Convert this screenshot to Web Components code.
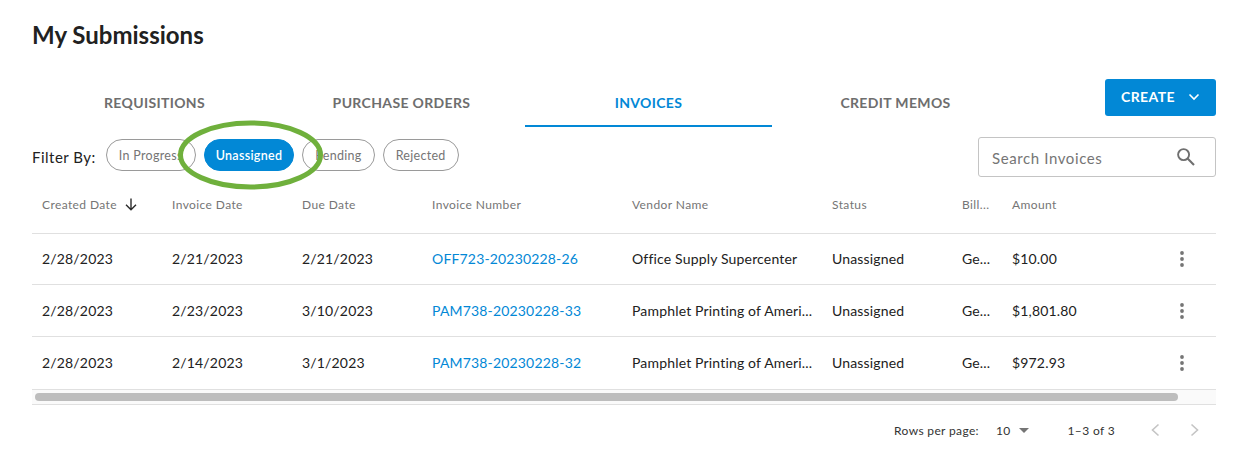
<!DOCTYPE html>
<html>
<head>
<meta charset="utf-8">
<title>My Submissions</title>
<style>
  body { margin: 0; background: #fff; font-family: Lato, "Open Sans", sans-serif; color: #212121; }
</style>
</head>
<body>
<submissions-page></submissions-page>
<script>
const icons = {
  chevron: '<svg width="12" height="8" viewBox="0 0 12 8"><path d="M1.5 1.5 6 6l4.5-4.5" fill="none" stroke="currentColor" stroke-width="1.6"/></svg>',
  search: '<svg width="20" height="20" viewBox="0 0 20 20"><circle cx="7.6" cy="7.6" r="5.5" fill="none" stroke="#6f6f6f" stroke-width="1.9"/><path d="M11.6 11.6 18 18" fill="none" stroke="#6f6f6f" stroke-width="2.1"/></svg>',
  down: '<svg width="12" height="13" viewBox="0 0 12 13"><path d="M6 0.5v11M1 6.8l5 5 5-5" fill="none" stroke="#2b2b2b" stroke-width="1.4"/></svg>',
  kebab: '<svg width="6" height="16" viewBox="0 0 6 16"><circle cx="3" cy="2" r="1.9" fill="#757575"/><circle cx="3" cy="8" r="1.9" fill="#757575"/><circle cx="3" cy="14" r="1.9" fill="#757575"/></svg>',
  left: '<svg width="10" height="14" viewBox="0 0 10 14"><path d="M8.5 1.5 2.5 7l6 5.5" fill="none" stroke="#c4c4c4" stroke-width="1.6"/></svg>',
  right: '<svg width="10" height="14" viewBox="0 0 10 14"><path d="M1.5 1.5 7.5 7l-6 5.5" fill="none" stroke="#c4c4c4" stroke-width="1.6"/></svg>'
};

class TabStrip extends HTMLElement {
  constructor() {
    super();
    this.attachShadow({ mode: 'open' });
    const active = this.getAttribute('active');
    const tabs = this.getAttribute('tabs').split('|');
    this.shadowRoot.innerHTML = `
      <style>
        :host { display: grid; grid-template-columns: repeat(4, 247px); height: 48px; margin-left: -1px; }
        div {
          display: flex; align-items: center; justify-content: center;
          font-size: 14px; font-weight: 700; letter-spacing: 0.35px; color: #6e6e6e;
          padding-bottom: 2px; box-sizing: border-box; height: 48px;
        }
        div.on { color: #0288d6; border-bottom: 2px solid #0288d6; padding-bottom: 0; }
      </style>
      ${tabs.map(t => `<div class="${t === active ? 'on' : ''}">${t}</div>`).join('')}
    `;
  }
}

class CreateButton extends HTMLElement {
  constructor() {
    super();
    this.attachShadow({ mode: 'open' });
    this.shadowRoot.innerHTML = `
      <style>
        :host {
          display: flex; align-items: center; box-sizing: border-box;
          width: 111px; height: 37px; padding: 0 0 2px 16px; gap: 13px;
          background: #0288d6; color: #fff; border-radius: 3px;
          font-size: 14px; font-weight: 700; letter-spacing: 0.4px;
        }
      </style>
      <slot></slot>${icons.chevron}
    `;
  }
}

class FilterChip extends HTMLElement {
  constructor() {
    super();
    this.attachShadow({ mode: 'open' });
    this.shadowRoot.innerHTML = `
      <style>
        :host {
          display: flex; align-items: center; box-sizing: border-box; height: 32px;
          padding: 0 12px; border: 1px solid #9a9a9a; border-radius: 16px;
          font-size: 12.5px; letter-spacing: 0.3px; color: #757575; white-space: nowrap;
        }
        :host([selected]) { background: #0288d6; border-color: #0288d6; color: #fff; font-weight: 600; padding: 0 11px; }
      </style>
      <slot></slot>
    `;
  }
}

class SearchBox extends HTMLElement {
  constructor() {
    super();
    this.attachShadow({ mode: 'open' });
    this.shadowRoot.innerHTML = `
      <style>
        :host {
          display: flex; align-items: center; justify-content: space-between; box-sizing: border-box;
          width: 238px; height: 40px; padding: 0 19px 0 13px;
          border: 1px solid #c4c4c4; border-radius: 3px;
          font-size: 15px; letter-spacing: 0.6px; color: #757575;
        }
        span { padding-top: 2px; }
      </style>
      <span><slot></slot></span>${icons.search}
    `;
  }
}

const COLS = 'grid-template-columns: 130px 130px 130px 200px 200px 130px 50px 160px 40px;';

class HeadRow extends HTMLElement {
  constructor() {
    super();
    this.attachShadow({ mode: 'open' });
    const labels = ['Created Date', 'Invoice Date', 'Due Date', 'Invoice Number', 'Vendor Name', 'Status', 'Bill...', 'Amount'];
    this.shadowRoot.innerHTML = `
      <style>
        :host {
          display: grid; ${COLS} height: 57px; box-sizing: border-box;
          border-bottom: 1px solid #e0e0e0; font-size: 12px; letter-spacing: 0.4px; color: #757575;
          padding-bottom: 2px;
        }
        div { display: flex; align-items: center; gap: 8px; padding-left: 10px; }
      </style>
      ${labels.map((l, i) => `<div>${l}${i === 0 ? icons.down : ''}</div>`).join('')}
    `;
  }
}

class InvoiceRow extends HTMLElement {
  constructor() {
    super();
    this.attachShadow({ mode: 'open' });
    const cells = this.getAttribute('cells').split('|');
    this.shadowRoot.innerHTML = `
      <style>
        :host {
          display: grid; ${COLS} box-sizing: border-box; height: var(--row-height, 52px);
          padding-bottom: var(--row-pad, 0);
          border-bottom: 1px solid #e0e0e0; font-size: 14px; letter-spacing: 0.17px; color: #212121;
        }
        div { display: flex; align-items: center; padding-left: 10px; white-space: nowrap; }
        .link { color: #0288d6; }
        .more { padding-left: 0; justify-content: center; }
      </style>
      ${cells.map((c, i) => `<div class="${i === 3 ? 'link' : ''}">${c}</div>`).join('')}
      <div class="more">${icons.kebab}</div>
    `;
  }
}

class ScrollBar extends HTMLElement {
  constructor() {
    super();
    this.attachShadow({ mode: 'open' });
    this.shadowRoot.innerHTML = `
      <style>
        :host {
          display: block; box-sizing: border-box; height: 15px; padding: 3px 38px 3px 3px;
          background: #fafafa; border-bottom: 1px solid #e0e0e0;
        }
        div { height: 8px; border-radius: 4px; background: #bdbdbd; }
      </style>
      <div></div>
    `;
  }
}

class TablePager extends HTMLElement {
  constructor() {
    super();
    this.attachShadow({ mode: 'open' });
    this.shadowRoot.innerHTML = `
      <style>
        :host {
          display: flex; align-items: center; justify-content: flex-end; height: 50px;
          padding-right: 16px; font-size: 12px; letter-spacing: 0.35px; color: #333;
        }
        .count { margin-left: 17px; }
        .caret { width: 0; height: 0; border: 5px solid transparent; border-top: 5px solid #757575; border-bottom: 0; margin: 0 39px 0 8px; }
        .range { margin-right: 35px; }
        .nav { display: flex; gap: 30px; align-items: center; margin-top: -1px; }
        span { display: block; }
      </style>
      <span>Rows per page:</span>
      <span class="count">10</span><span class="caret"></span>
      <span class="range">1–3 of 3</span>
      <span class="nav">${icons.left}${icons.right}</span>
    `;
  }
}

class SubmissionsPage extends HTMLElement {
  constructor() {
    super();
    this.attachShadow({ mode: 'open' });
    this.shadowRoot.innerHTML = `
      <style>
        :host { display: block; box-sizing: border-box; width: 1246px; height: 461px; padding: 20px 30px 0 32px; position: relative; overflow: hidden; }
        h1 { margin: 0 0 29px; height: 30px; line-height: 30px; font-size: 24px; font-weight: 700; color: #212121; }
        .top { display: flex; justify-content: space-between; align-items: flex-start; }
        .filters { display: flex; justify-content: space-between; align-items: flex-start; padding-top: 10px; }
        .chips { display: flex; align-items: center; gap: 8px; margin-top: 2px; }
        .label { font-size: 15px; color: #212121; margin: 4px 2px 0 0; letter-spacing: 0.5px; }
        svg.ring { position: absolute; left: 176px; top: 119px; pointer-events: none; }
      </style>
      <h1>My Submissions</h1>
      <div class="top">
        <tab-strip tabs="REQUISITIONS|PURCHASE ORDERS|INVOICES|CREDIT MEMOS" active="INVOICES"></tab-strip>
        <create-button>CREATE</create-button>
      </div>
      <div class="filters">
        <div class="chips">
          <span class="label">Filter By:</span>
          <filter-chip>In Progress</filter-chip>
          <filter-chip selected>Unassigned</filter-chip>
          <filter-chip>Pending</filter-chip>
          <filter-chip>Rejected</filter-chip>
        </div>
        <search-box>Search Invoices</search-box>
      </div>
      <head-row></head-row>
      <invoice-row style="--row-height:51px;--row-pad:1px" cells="2/28/2023|2/21/2023|2/21/2023|OFF723-20230228-26|Office Supply Supercenter|Unassigned|Ge...|$10.00"></invoice-row>
      <invoice-row style="--row-height:52px" cells="2/28/2023|2/23/2023|3/10/2023|PAM738-20230228-33|Pamphlet Printing of Ameri...|Unassigned|Ge...|$1,801.80"></invoice-row>
      <invoice-row style="--row-height:53px;--row-pad:1px" cells="2/28/2023|2/14/2023|3/1/2023|PAM738-20230228-32|Pamphlet Printing of Ameri...|Unassigned|Ge...|$972.93"></invoice-row>
      <scroll-bar></scroll-bar>
      <table-pager></table-pager>
      <svg class="ring" width="148" height="72" viewBox="0 0 148 72"><ellipse cx="74.5" cy="36" rx="70" ry="32" fill="none" stroke="#6fb03c" stroke-width="5"/></svg>
    `;
  }
}

customElements.define('tab-strip', TabStrip);
customElements.define('create-button', CreateButton);
customElements.define('filter-chip', FilterChip);
customElements.define('search-box', SearchBox);
customElements.define('head-row', HeadRow);
customElements.define('invoice-row', InvoiceRow);
customElements.define('scroll-bar', ScrollBar);
customElements.define('table-pager', TablePager);
customElements.define('submissions-page', SubmissionsPage);
</script>
</body>
</html>
